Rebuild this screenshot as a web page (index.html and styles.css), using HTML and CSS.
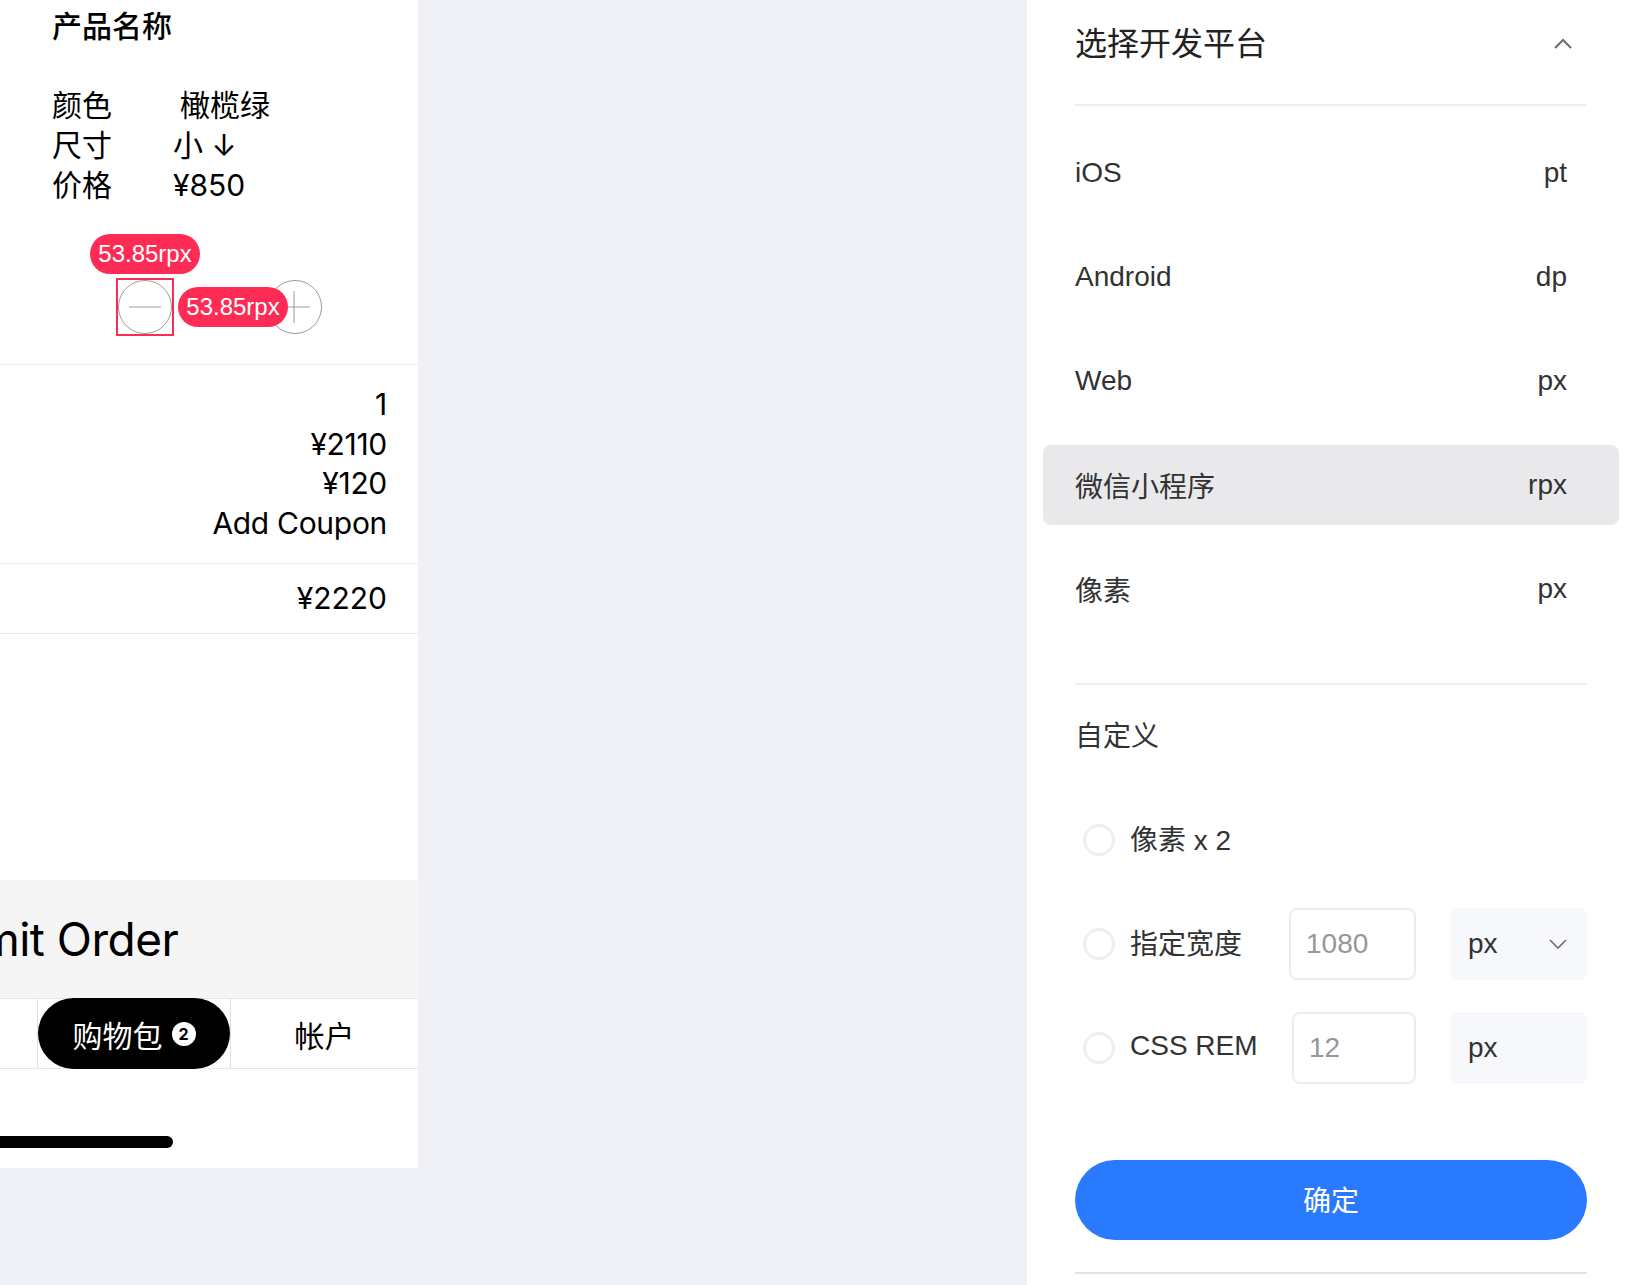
FILE: index.html
```html
<!DOCTYPE html>
<html lang="zh-CN">
<head>
<meta charset="utf-8">
<title>选择开发平台</title>
<link rel="stylesheet" href="styles.css">
</head>
<body>
<div class="app">
  <section class="phone">
    <div class="product">
      <h1 class="pname">产品名称</h1>
      <div class="specs">
        <div class="spec"><span class="spec-k">颜色</span><span class="spec-v olive">橄榄绿</span></div>
        <div class="spec"><span class="spec-k">尺寸</span><span class="spec-v">小 ↓</span></div>
        <div class="spec"><span class="spec-k">价格</span><span class="spec-v">¥850</span></div>
      </div>
      <div class="stepper">
        <span class="measure measure-top">53.85rpx</span>
        <span class="step-frame">
          <span class="step">
            <svg viewBox="0 0 54 54" width="54" height="54"><line x1="11" y1="27" x2="43" y2="27" stroke="#9a9a9a" stroke-width="1"/></svg>
          </span>
        </span>
        <span class="measure measure-mid">53.85rpx</span>
        <span class="step">
          <svg viewBox="0 0 54 54" width="54" height="54"><line x1="10" y1="27" x2="42" y2="27" stroke="#9a9a9a" stroke-width="1"/><line x1="26" y1="11" x2="26" y2="43" stroke="#9a9a9a" stroke-width="1"/></svg>
        </span>
      </div>
    </div>
    <div class="summary">
      <div>1</div>
      <div>¥2110</div>
      <div>¥120</div>
      <div>Add Coupon</div>
    </div>
    <div class="total">¥2220</div>
    <div class="spacer"></div>
    <div class="submit"><span class="submit-text">Submit Order</span></div>
    <nav class="tabs">
      <div class="tab"></div>
      <div class="tab tab-active"><span class="pill">购物包<span class="pill-badge">2</span></span></div>
      <div class="tab">帐户</div>
    </nav>
    <div class="home"><span class="home-bar"></span></div>
  </section>

  <div class="canvas"></div>

  <aside class="panel">
    <header class="panel-head">
      <h2 class="panel-title">选择开发平台</h2>
      <svg class="chev-up" viewBox="0 0 20 12" width="20" height="12"><polyline points="2,10 10,2 18,10" fill="none" stroke="#6b6b70" stroke-width="2"/></svg>
    </header>
    <ul class="platforms">
      <li class="platform"><span>iOS</span><span>pt</span></li>
      <li class="platform"><span>Android</span><span>dp</span></li>
      <li class="platform"><span>Web</span><span>px</span></li>
      <li class="platform platform-active"><span>微信小程序</span><span>rpx</span></li>
      <li class="platform"><span>像素</span><span>px</span></li>
    </ul>
    <div class="custom">
      <div class="custom-title">自定义</div>
      <div class="opts">
        <div class="opt">
          <span class="radio"></span>
          <span class="opt-label">像素 x 2</span>
        </div>
        <div class="opt">
          <span class="radio"></span>
          <span class="opt-label">指定宽度</span>
          <span class="field"><span class="ph">1080</span></span>
          <span class="select"><span>px</span><svg viewBox="0 0 18 10" width="18" height="10"><polyline points="1,1 9,9 17,1" fill="none" stroke="#6b6b70" stroke-width="1.6"/></svg></span>
        </div>
        <div class="opt">
          <span class="radio"></span>
          <span class="opt-label">CSS REM</span>
          <span class="field field-rem"><span class="ph">12</span></span>
          <span class="select"><span>px</span></span>
        </div>
      </div>
      <button class="confirm">确定</button>
      <div class="bottom-line"></div>
    </div>
  </aside>
</div>
</body>
</html>
```

FILE: styles.css
```css
html, body {
  margin: 0;
  padding: 0;
}
body {
  background: #f0f1f6;
  overflow: hidden;
  width: 1625px;
  height: 1285px;
}
.app {
  display: flex;
  align-items: flex-start;
  width: 1635px;
  height: 1285px;
}

/* ---------- phone (left) ---------- */
.phone {
  flex: 0 0 418px;
  width: 418px;
  height: 1168px;
  background: #ffffff;
  display: flex;
  flex-direction: column;
  overflow: hidden;
  font-family: "Inter", "Noto Sans CJK SC", sans-serif;
  color: #000;
}
.product {
  padding: 7px 0 28px 52px;
  border-bottom: 1px solid #ececec;
}
.pname {
  margin: 0;
  font-size: 30px;
  line-height: 39px;
  font-weight: 500;
}
.specs {
  margin-top: 39px;
  font-size: 30px;
  line-height: 40px;
}
.spec {
  display: grid;
  grid-template-columns: 121px auto;
}
.olive {
  padding-left: 7px;
}
.stepper {
  position: relative;
  display: flex;
  align-items: center;
  gap: 94px;
  margin-top: 73px;
  padding-left: 64px;
  height: 58px;
}
.step-frame {
  display: block;
  box-sizing: border-box;
  width: 58px;
  height: 58px;
  border: 2px solid #fe2c55;
}
.step {
  box-sizing: border-box;
  width: 54px;
  height: 54px;
  border: 1px solid #9a9a9a;
  border-radius: 50%;
  display: block;
}
.step svg {
  display: block;
  margin: -1px;
}
.measure {
  position: absolute;
  width: 110px;
  height: 40px;
  border-radius: 20px;
  background: #fe2c55;
  color: #fff;
  font-family: "Liberation Sans", Arial, sans-serif;
  font-size: 24px;
  line-height: 40px;
  text-align: center;
}
.measure-top {
  left: 38px;
  top: -44px;
}
.measure-mid {
  left: 126px;
  top: 9px;
}
.summary {
  padding: 20px 31px 20px 0;
  text-align: right;
  font-size: 30px;
  line-height: 39.5px;
  letter-spacing: -0.3px;
  border-bottom: 1px solid #ececec;
}
.total {
  padding: 15px 31px 15px 0;
  text-align: right;
  font-size: 30px;
  line-height: 39px;
  border-bottom: 1px solid #ececec;
}
.spacer {
  flex: 1;
}
.submit {
  height: 118px;
  background: #f5f5f5;
  display: flex;
  align-items: center;
  overflow: hidden;
}
.submit-text {
  margin-left: -104px;
  font-size: 46px;
  font-weight: 400;
  letter-spacing: -0.5px;
  white-space: nowrap;
  line-height: 1;
}
.tabs {
  display: grid;
  grid-template-columns: 193px 193px 188px;
  margin-left: -156px;
  height: 71px;
  box-sizing: border-box;
  border-top: 1px solid #e6e6e6;
  border-bottom: 1px solid #e6e6e6;
}
.tab {
  display: flex;
  align-items: center;
  justify-content: center;
  border-left: 1px solid #e0e0e0;
  font-size: 30px;
}
.tab-active {
  align-items: stretch;
}
.pill {
  flex: 1;
  margin: -1px 0;
  background: #000;
  color: #fff;
  border-radius: 36px;
  display: flex;
  align-items: center;
  justify-content: center;
  gap: 9px;
}
.pill-badge {
  width: 24px;
  height: 24px;
  border-radius: 50%;
  background: #fff;
  color: #000;
  font-size: 16px;
  font-weight: 700;
  line-height: 24px;
  text-align: center;
}
.home {
  height: 99px;
}
.home-bar {
  display: block;
  margin: 67px 0 0 -100px;
  width: 273px;
  height: 12px;
  border-radius: 6px;
  background: #000;
}

/* ---------- middle ---------- */
.canvas {
  flex: 0 0 609px;
  height: 1285px;
}

/* ---------- panel (right) ---------- */
.panel {
  flex: 0 0 608px;
  box-sizing: border-box;
  width: 608px;
  height: 1285px;
  padding: 0 48px;
  background: #fff;
  font-family: "Liberation Sans", "Noto Sans CJK SC", sans-serif;
  color: #323233;
}
.panel-head {
  height: 88px;
  padding-bottom: 16px;
  border-bottom: 2px solid #eeeeef;
  display: flex;
  align-items: center;
  justify-content: space-between;
}
.panel-title {
  margin: 0;
  font-size: 32px;
  font-weight: 400;
  line-height: 44px;
  color: #222;
}
.chev-up {
  margin-right: 14px;
  display: block;
}
.platforms {
  list-style: none;
  margin: 0;
  padding: 27px 0 54px;
  border-bottom: 2px solid #eeeeef;
  display: flex;
  flex-direction: column;
  gap: 24px;
}
.platform {
  height: 80px;
  margin: 0 -32px;
  padding: 0 52px 0 32px;
  border-radius: 8px;
  display: flex;
  align-items: center;
  justify-content: space-between;
  font-size: 28px;
}
.platform-active {
  background: #e9e9ec;
}
.custom-title {
  margin-top: 32px;
  font-size: 28px;
  line-height: 40px;
}
.opts {
  margin-top: 47px;
  display: flex;
  flex-direction: column;
  gap: 32px;
}
.opt {
  display: grid;
  grid-template-columns: 55px 159px 127px 35px 136px;
  align-items: center;
  height: 72px;
  font-size: 28px;
}
.radio {
  box-sizing: border-box;
  width: 32px;
  height: 32px;
  margin-left: 8px;
  border: 3px solid #eeeff2;
  border-radius: 50%;
}
.opt-label {
  white-space: nowrap;
  margin-bottom: 4px;
}
.field {
  box-sizing: border-box;
  height: 72px;
  border: 2px solid #ededf0;
  border-radius: 8px;
  display: flex;
  align-items: center;
  padding-left: 15px;
}
.field-rem {
  margin-left: 3px;
}
.ph {
  color: #96969b;
}
.select {
  grid-column: 5;
  box-sizing: border-box;
  height: 72px;
  border-radius: 8px;
  background: #f7f8fb;
  display: flex;
  align-items: center;
  justify-content: space-between;
  padding: 0 20px 0 17px;
}
.select svg {
  display: block;
}
.confirm {
  display: block;
  width: 100%;
  height: 80px;
  margin-top: 76px;
  border: 0;
  border-radius: 40px;
  background: #2a7aff;
  color: #fff;
  font-family: "Liberation Sans", "Noto Sans CJK SC", sans-serif;
  font-size: 28px;
  padding: 0 0 3px;
}
.bottom-line {
  margin-top: 32px;
  height: 2px;
  background: #e3e3e3;
}
```
